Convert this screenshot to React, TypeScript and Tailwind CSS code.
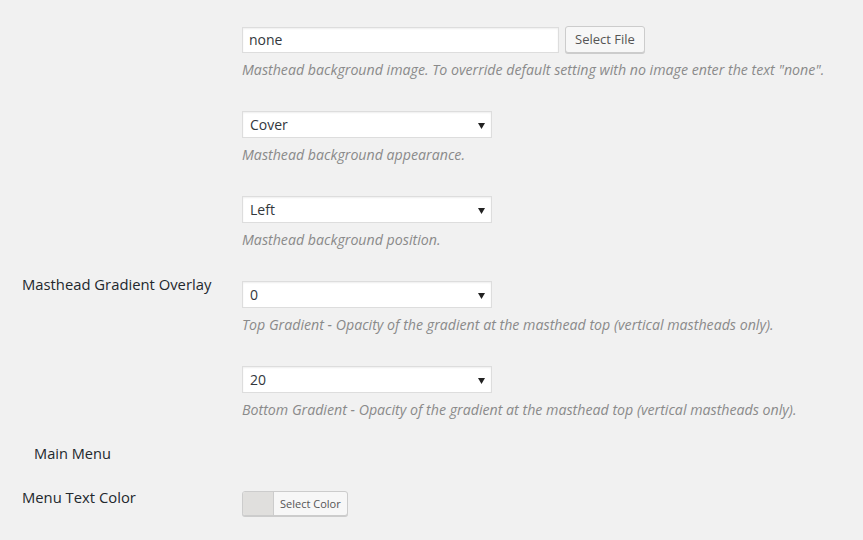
const font = { fontFamily: '"Open Sans", "Noto Sans", sans-serif' };

function Select({ value }: { value: string }) {
  return (
    <div className="relative mt-px flex h-[27px] w-[250px] items-center border border-[#dddddd] bg-white pl-[7px] text-[14px] text-[#32373c] shadow-[inset_0_1px_2px_rgba(0,0,0,0.07)]">
      {value}
      <svg className="absolute right-[6px] top-[11px]" width="7" height="6" viewBox="0 0 7 6">
        <path d="M0 0h7L3.5 6z" fill="#222" />
      </svg>
    </div>
  );
}

function Desc({ children }: { children: React.ReactNode }) {
  return <p className="mt-[6px] text-[14.2px] italic leading-[21px] text-[#8a8a8a]">{children}</p>;
}

function Row({ label, children }: { label?: string; children: React.ReactNode }) {
  return (
    <div className="flex h-[85px]">
      <div className="-mt-[6px] w-[220px] shrink-0 text-[14.8px] leading-[21px] text-[#23282d]">{label}</div>
      <div className="flex flex-col">{children}</div>
    </div>
  );
}

export default function App() {
  return (
    <div className="min-h-[540px] bg-[#f1f1f1] pl-[22px] pt-[25px]" style={font}>
      <Row>
        <div className="flex items-center gap-[6px]">
          <div className="mt-px flex h-[26px] w-[317px] items-center border border-[#dddddd] bg-white pl-[6px] text-[14px] text-[#32373c] shadow-[inset_0_1px_2px_rgba(0,0,0,0.07)]">
            none
          </div>
          <button className="mt-px h-[27px] rounded-[3px] border border-[#cccccc] bg-[#f7f7f7] px-[9px] text-[13px] text-[#555555] shadow-[0_1px_0_#cccccc]">
            Select File
          </button>
        </div>
        <Desc>Masthead background image. To override default setting with no image enter the text "none".</Desc>
      </Row>
      <Row>
        <Select value="Cover" />
        <Desc>Masthead background appearance.</Desc>
      </Row>
      <Row>
        <Select value="Left" />
        <Desc>Masthead background position.</Desc>
      </Row>
      <Row label="Masthead Gradient Overlay">
        <Select value="0" />
        <Desc>Top Gradient - Opacity of the gradient at the masthead top (vertical mastheads only).</Desc>
      </Row>
      <Row>
        <Select value="20" />
        <Desc>Bottom Gradient - Opacity of the gradient at the masthead top (vertical mastheads only).</Desc>
      </Row>
      <div className="-mt-[7px] pl-[12px] text-[14.6px] leading-[20px] text-[#23282d]">Main Menu</div>
      <div className="mt-[24px] flex">
        <div className="w-[220px] shrink-0 text-[14.8px] leading-[20px] text-[#23282d]">Menu Text Color</div>
        <button className="mt-[4px] flex h-[25px] overflow-hidden rounded-[3px] border border-[#cccccc] bg-[#f7f7f7] shadow-[0_1px_0_#cccccc]">
          <span className="h-full w-[31px] border-r border-[#cccccc] bg-[#e0dfdd]" />
          <span className="px-[6px] text-[11px] leading-[23px] text-[#555555]">Select Color</span>
        </button>
      </div>
    </div>
  );
}
